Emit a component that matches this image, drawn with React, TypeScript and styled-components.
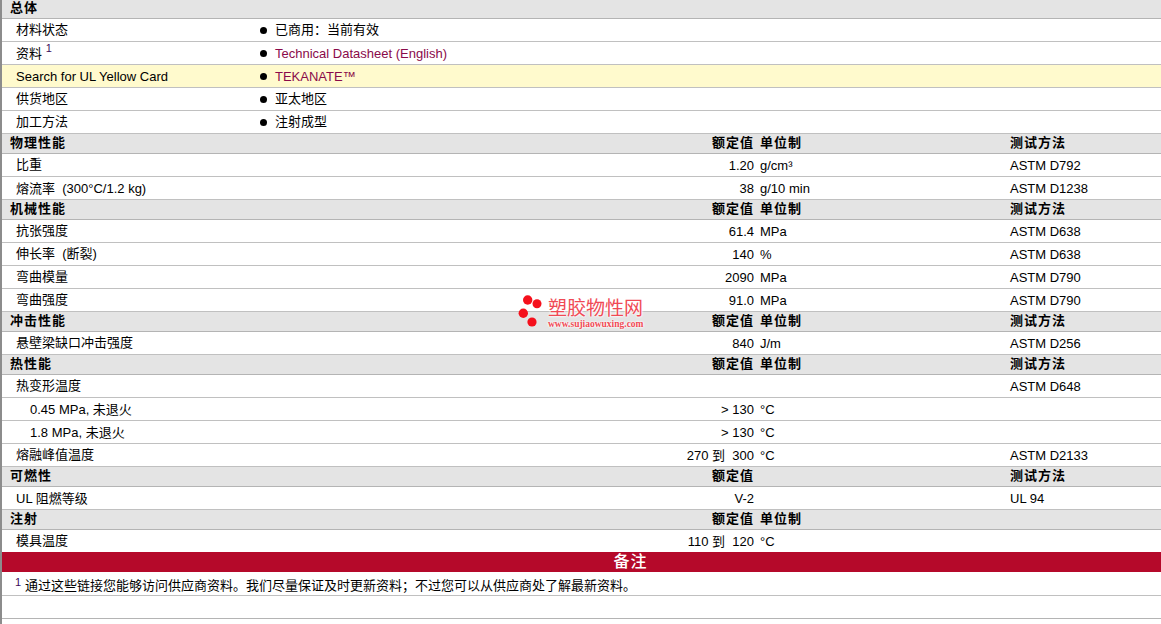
import React from 'react';
import styled, { createGlobalStyle } from 'styled-components';

const GlobalStyle = createGlobalStyle`
  html, body {
    margin: 0;
    padding: 0;
    background: #fff;
  }
  body {
    font-family: "Liberation Sans", "Noto Sans CJK SC", sans-serif;
    font-size: 13px;
    color: #000;
    overflow: hidden;
  }
`;

type Prop = {
  label: string;
  value?: string;
  unit?: string;
  method?: string;
  indent?: boolean;
  noBorder?: boolean;
  cjk?: boolean;
};

type Section = {
  title: string;
  valueHead?: string;
  unitHead?: string;
  methodHead?: string;
  props: Prop[];
};

const sections: Section[] = [
  {
    title: '物理性能',
    valueHead: '额定值',
    unitHead: '单位制',
    methodHead: '测试方法',
    props: [
      { label: '比重', value: '1.20', unit: 'g/cm³', method: 'ASTM D792', cjk: true },
      { label: '熔流率  (300°C/1.2 kg)', value: '38', unit: 'g/10 min', method: 'ASTM D1238' },
    ],
  },
  {
    title: '机械性能',
    valueHead: '额定值',
    unitHead: '单位制',
    methodHead: '测试方法',
    props: [
      { label: '抗张强度', value: '61.4', unit: 'MPa', method: 'ASTM D638', cjk: true },
      { label: '伸长率  (断裂)', value: '140', unit: '%', method: 'ASTM D638', cjk: true },
      { label: '弯曲模量', value: '2090', unit: 'MPa', method: 'ASTM D790', cjk: true },
      { label: '弯曲强度', value: '91.0', unit: 'MPa', method: 'ASTM D790', cjk: true },
    ],
  },
  {
    title: '冲击性能',
    valueHead: '额定值',
    unitHead: '单位制',
    methodHead: '测试方法',
    props: [{ label: '悬壁梁缺口冲击强度', value: '840', unit: 'J/m', method: 'ASTM D256', cjk: true }],
  },
  {
    title: '热性能',
    valueHead: '额定值',
    unitHead: '单位制',
    methodHead: '测试方法',
    props: [
      { label: '热变形温度', method: 'ASTM D648', cjk: true },
      { label: '0.45 MPa, 未退火', value: '> 130', unit: '°C', indent: true },
      { label: '1.8 MPa, 未退火', value: '> 130', unit: '°C', indent: true },
      { label: '熔融峰值温度', value: '270 到  300', unit: '°C', method: 'ASTM D2133', cjk: true },
    ],
  },
  {
    title: '可燃性',
    valueHead: '额定值',
    methodHead: '测试方法',
    props: [{ label: 'UL 阻燃等级', value: 'V-2', method: 'UL 94' }],
  },
  {
    title: '注射',
    valueHead: '额定值',
    unitHead: '单位制',
    props: [{ label: '模具温度', value: '110 到  120', unit: '°C', noBorder: true, cjk: true }],
  },
];

const App = () => {
  return (
    <Page>
      <GlobalStyle />
      <SectionHead $first>
        <HeadTitle>总体</HeadTitle>
      </SectionHead>
      <InfoRow>
        <InfoLabel $cjk>材料状态</InfoLabel>
        <Bullet />
        <InfoText $cjk>已商用：当前有效</InfoText>
      </InfoRow>
      <InfoRow>
        <InfoLabel>
          资料 <Sup>1</Sup>
        </InfoLabel>
        <Bullet />
        <InfoLink>Technical Datasheet (English)</InfoLink>
      </InfoRow>
      <InfoRow $highlight>
        <InfoLabel>Search for UL Yellow Card</InfoLabel>
        <Bullet />
        <InfoLink>TEKANATE™</InfoLink>
      </InfoRow>
      <InfoRow>
        <InfoLabel $cjk>供货地区</InfoLabel>
        <Bullet />
        <InfoText $cjk>亚太地区</InfoText>
      </InfoRow>
      <InfoRow>
        <InfoLabel $cjk>加工方法</InfoLabel>
        <Bullet />
        <InfoText $cjk>注射成型</InfoText>
      </InfoRow>

      {sections.map((section) => (
        <React.Fragment key={section.title}>
          <SectionHead>
            <HeadTitle>{section.title}</HeadTitle>
            <HeadValue>{section.valueHead}</HeadValue>
            <HeadTitle>{section.unitHead}</HeadTitle>
            <HeadTitle>{section.methodHead}</HeadTitle>
          </SectionHead>
          {section.props.map((prop) => (
            <PropRow key={prop.label} $noBorder={prop.noBorder}>
              <PropLabel $indent={prop.indent} $cjk={prop.cjk}>
                {prop.label}
              </PropLabel>
              <PropValue>{prop.value}</PropValue>
              <span>{prop.unit}</span>
              <span>{prop.method}</span>
            </PropRow>
          ))}
        </React.Fragment>
      ))}

      <NotesBar>备注</NotesBar>
      <NoteRow>
        <NoteSup>1</NoteSup>
        <span>通过这些链接您能够访问供应商资料。我们尽量保证及时更新资料；不过您可以从供应商处了解最新资料。</span>
      </NoteRow>
      <EmptyRow />

      <Watermark>
        <svg width="25" height="34" viewBox="0 0 25 34">
          <circle cx="9.7" cy="5" r="4.7" fill="#f5101c" />
          <circle cx="19" cy="8.7" r="4.5" fill="#f5101c" />
          <circle cx="5.3" cy="18.3" r="4.7" fill="#f5101c" />
          <circle cx="14" cy="27" r="4.6" fill="#f5101c" />
        </svg>
        <WatermarkText>
          <WatermarkName>塑胶物性网</WatermarkName>
          <WatermarkUrl>www.sujiaowuxing.com</WatermarkUrl>
        </WatermarkText>
      </Watermark>
    </Page>
  );
};

export default App;

const Page = styled.div`
  position: relative;
  width: 1161px;
  height: 624px;
  box-sizing: border-box;
  border-left: 2px solid #8c8c8c;
  background: #fff;
  overflow: hidden;
`;

const SectionHead = styled.div<{ $first?: boolean }>`
  display: grid;
  grid-template-columns: 604px 146px 250px 1fr;
  box-sizing: border-box;
  height: ${(p) => (p.$first ? '19px' : '20px')};
  padding-left: 8px;
  line-height: ${(p) => (p.$first ? '15px' : '18px')};
  background: #e4e4e4;
  border-bottom: 1px solid #b4b4b4;
  font-weight: bold;
  letter-spacing: 1px;
  white-space: nowrap;
`;

const HeadTitle = styled.span`
  display: block;
`;

const HeadValue = styled.span`
  display: block;
  padding-right: 6px;
  text-align: right;
`;

const BaseRow = styled.div`
  box-sizing: border-box;
  height: 23px;
  padding-top: 1px;
  line-height: 22px;
  border-bottom: 1px solid #c0c0c0;
  white-space: nowrap;
`;

const InfoRow = styled(BaseRow)<{ $highlight?: boolean }>`
  display: flex;
  align-items: center;
  padding-left: 14px;
  background: ${(p) => (p.$highlight ? '#fffacd' : '#fff')};
`;

const InfoText = styled.span<{ $cjk?: boolean }>`
  display: block;
  ${(p) => (p.$cjk ? 'line-height: 20px; padding-bottom: 2px;' : '')}
`;

const InfoLabel = styled(InfoText)`
  width: 244px;
  flex-shrink: 0;
`;

const Bullet = styled.i`
  display: block;
  width: 7px;
  height: 7px;
  margin: 0 8px 0 0;
  border-radius: 50%;
  background: #000;
  flex-shrink: 0;
`;

const InfoLink = styled.span`
  color: #8a0a4a;
`;

const Sup = styled.sup`
  font-size: 11px;
  line-height: 0;
  color: #3c0a5c;
  vertical-align: 6px;
`;

const PropRow = styled(BaseRow)<{ $noBorder?: boolean }>`
  display: grid;
  grid-template-columns: 598px 146px 250px 1fr;
  padding-left: 14px;
  ${(p) => (p.$noBorder ? 'border-bottom: 0;' : '')}
  height: ${(p) => (p.$noBorder ? '22px' : '23px')};
`;

const PropLabel = styled.span<{ $indent?: boolean; $cjk?: boolean }>`
  padding-left: ${(p) => (p.$indent ? '14px' : '0')};
  white-space: pre;
  ${(p) => (p.$cjk ? 'line-height: 20px;' : '')}
`;

const PropValue = styled.span`
  padding-right: 6px;
  text-align: right;
  white-space: pre;
`;

const NotesBar = styled.div`
  box-sizing: border-box;
  height: 20px;
  line-height: 20px;
  padding-left: 98px;
  text-align: center;
  background: #b5092a;
  color: #fff;
  font-size: 16px;
  font-weight: 500;
  letter-spacing: 1px;
`;

const NoteRow = styled(BaseRow)`
  display: flex;
  height: 24px;
  padding-top: 3px;
  padding-left: 13px;
`;

const NoteSup = styled.span`
  width: 10px;
  font-size: 11px;
  line-height: 14px;
  color: #3c0a5c;
`;

const EmptyRow = styled.div`
  box-sizing: border-box;
  height: 23px;
  border-bottom: 1px solid #b4b4b4;
`;

const Watermark = styled.div`
  position: absolute;
  left: 516px;
  top: 295px;
  display: flex;
  gap: 5px;
`;

const WatermarkText = styled.div`
  display: flex;
  flex-direction: column;
  padding-top: 4px;
  text-shadow: 0 0 2px #fff, 0 0 2px #fff, 0 0 3px #fff;
`;

const WatermarkName = styled.span`
  font-size: 19px;
  line-height: 20px;
  color: #f04a55;
`;

const WatermarkUrl = styled.span`
  font-family: "Liberation Serif", serif;
  font-size: 9.5px;
  font-weight: bold;
  line-height: 10px;
  color: #f04a55;
`;
